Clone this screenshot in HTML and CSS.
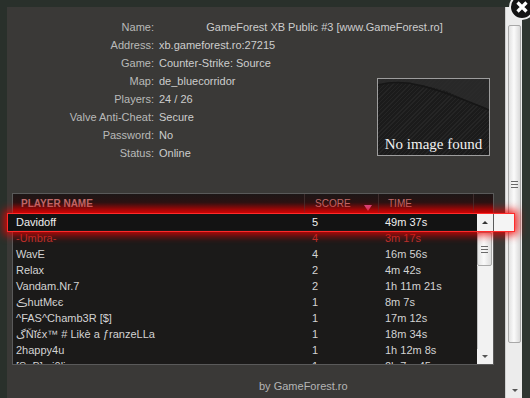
FILE: index.html
```html
<!DOCTYPE html>
<html lang="en">
<head>
    <meta charset="UTF-8">
    <title>Server Info</title>
    <link rel="stylesheet" href="styles.css">
</head>
<body>

<div class="page">

    <div class="modal">

        <div class="info">
            <span class="lbl">Name:</span><span class="val name">GameForest XB Public #3 [www.GameForest.ro]</span>
            <span class="lbl">Address:</span><span class="val">xb.gameforest.ro:27215</span>
            <span class="lbl">Game:</span><span class="val">Counter-Strike: Source</span>
            <span class="lbl">Map:</span><span class="val">de_bluecorridor</span>
            <span class="lbl">Players:</span><span class="val">24 / 26</span>
            <span class="lbl">Valve Anti-Cheat:</span><span class="val">Secure</span>
            <span class="lbl">Password:</span><span class="val">No</span>
            <span class="lbl">Status:</span><span class="val">Online</span>

            <div class="noimg">
                <svg class="ridge" width="111" height="76" viewBox="0 0 111 76">
                    <polygon points="0,0 111,0 111,30 90,22 68,12 45,6 22,4 0,5" fill="#2c2c2c" opacity="0.8"/>
                    <path d="M0,6 C12,3 26,2 44,7 C60,11 80,18 111,31" fill="none" stroke="#161616" stroke-width="1.5"/>
                </svg>
                <span class="noimg-text">No image found</span>
            </div>
        </div>

        <div class="plist-wrap">
            <div class="plist">
                <div class="phead">
                    <span class="h-name">PLAYER NAME</span>
                    <span class="h-score">SCORE <i class="sort"></i></span>
                    <span class="h-time">TIME</span>
                    <span class="h-end"></span>
                </div>
                <div class="pbody">
                    <div class="rows">
                        <div class="row sel"><span>Davidoff</span><span>5</span><span>49m 37s</span></div>
                        <div class="row red"><span>-Umbra-</span><span>4</span><span>3m 17s</span></div>
                        <div class="row"><span>WavE</span><span>4</span><span>16m 56s</span></div>
                        <div class="row"><span>Relax</span><span>2</span><span>4m 42s</span></div>
                        <div class="row"><span>Vandam.Nr.7</span><span>2</span><span>1h 11m 21s</span></div>
                        <div class="row"><span>ڪhutMєє</span><span>1</span><span>8m 7s</span></div>
                        <div class="row"><span>^FAS^Chamb3R [$]</span><span>1</span><span>17m 12s</span></div>
                        <div class="row"><span>گŇĭέx™ # Likè a ƒranzeLLa</span><span>1</span><span>18m 34s</span></div>
                        <div class="row"><span>2happy4u</span><span>1</span><span>1h 12m 8s</span></div>
                        <div class="row"><span>[S_B]...i0li</span><span>1</span><span>2h 7m 45s</span></div>
                    </div>
                    <div class="sb">
                        <div class="sb-up"><i class="arr-up"></i></div>
                        <div class="sb-thumb"><i class="grip"></i></div>
                        <div class="sb-track"></div>
                        <div class="sb-down"><i class="arr-down"></i></div>
                    </div>
                </div>
            </div>
            <div class="hl"></div>
        </div>

        <div class="credit">by GameForest.ro</div>
    </div>

    <div class="pagebar">
        <div class="pb-thumb"><i class="grip"></i></div>
        <div class="pb-down"><i class="arr-down"></i></div>
    </div>
    <div class="edge"></div>

    <div class="close">
        <svg width="22" height="22" viewBox="0 0 22 22">
            <path d="M6.5,6.5 L15.5,15.5 M15.5,6.5 L6.5,15.5" stroke="#fff" stroke-width="3.2"/>
        </svg>
    </div>
</div>

</body>
</html>
```

FILE: styles.css
```css
/* Base */
* { box-sizing: border-box; }

body {
    margin: 0;
    background: #29302b;
    font-family: "Liberation Sans", Arial, "DejaVu Sans", sans-serif;
    font-size: 11px;
    overflow: hidden;
}

.page {
    position: relative;
    display: flex;
    height: 398px;
}

/* Modal window */
.modal {
    width: 498px;
    height: 391px;
    margin: 7px 0 0 7px;
    padding-top: 11px;
    background: #3a3937;
}

/* Server info */
.info {
    display: grid;
    grid-template-columns: 152px 218px 113px;
    grid-auto-rows: 18px;
    line-height: 18px;
}
.lbl {
    grid-column: 1;
    text-align: right;
    padding-right: 5px;
    color: #b9b9b9;
}
.val { color: #cdcdcd; white-space: nowrap; }
.val.name { grid-column: 2 / span 2; text-align: center; }

.noimg {
    grid-column: 3;
    grid-row: 4 / span 5;
    align-self: center;
    height: 78px;
    border: 1px solid #9d9d9d;
    background-color: #1c1c1c;
    background-image: repeating-linear-gradient(135deg, #1b1b1b 0 2px, #252525 2px 3px);
    display: grid;
}
.ridge, .noimg-text { grid-area: 1 / 1; }
.noimg-text {
    align-self: end;
    text-align: center;
    padding-bottom: 2px;
    font-family: "Liberation Serif", "DejaVu Serif", serif;
    font-size: 15px;
    line-height: 18px;
    color: #f2f2f2;
}

/* Player list */
.plist-wrap {
    position: relative;
    width: 482px;
    margin: 31px 0 0 5px;
}
.plist {
    height: 172px;
    border: 1px solid #5a5a5a;
    background: #1b1a19;
    overflow: hidden;
}
.phead {
    display: grid;
    grid-template-columns: 292px 74px 95px 19px;
    height: 19px;
    background: linear-gradient(#1d1717, #2a1212 45%, #900808);
}
.phead span {
    display: flex;
    border-right: 1px solid #3d2c2c;
    line-height: 19px;
    font-size: 10px;
    color: #c06a6a;
}
.phead .h-name { padding-left: 8px; font-weight: bold; }
.phead .h-score { padding-left: 10px; }
.phead .h-time { padding-left: 9px; }
.phead .h-end { border-right: none; }
.sort {
    margin: 11px 6px 0 auto;
    width: 0; height: 0;
    border-left: 4px solid transparent;
    border-right: 4px solid transparent;
    border-top: 6px solid #d24b86;
}

.pbody { display: flex; height: 151px; }
.rows { width: 464px; padding-top: 1px; }
.row {
    display: grid;
    grid-template-columns: 291px 74px 99px;
    height: 16px;
    line-height: 16px;
    color: #d3d3d3;
    white-space: nowrap;
}
.row span:nth-child(1) { padding-left: 3px; }
.row span:nth-child(2) { padding-left: 8px; }
.row span:nth-child(3) { padding-left: 7px; }
.row.sel { background: #131313; color: #efefef; }
.row.red { color: #b8332e; }

/* Inner scrollbar */
.sb {
    width: 16px;
    display: flex;
    flex-direction: column;
    background: #f2f2f2;
}
.sb-up { height: 19px; display: flex; align-items: center; justify-content: center; }
.sb-thumb {
    height: 34px;
    margin: 0 1px 0 0;
    border: 1px solid #a9a9a9;
    border-radius: 2px;
    background: linear-gradient(to right, #e4e4e4, #fafafa 45%, #dedede);
    display: flex;
    align-items: center;
    justify-content: center;
}
.sb-track { flex: 1; border-left: 1px solid #c4c4c4; }
.sb-down { height: 15px; display: flex; align-items: center; justify-content: center; }

.arr-up {
    width: 0; height: 0;
    border-left: 3px solid transparent;
    border-right: 3px solid transparent;
    border-bottom: 3px solid #333;
}
.arr-down {
    width: 0; height: 0;
    border-left: 3px solid transparent;
    border-right: 3px solid transparent;
    border-top: 3px solid #555;
}
.grip {
    width: 7px;
    height: 7px;
    background: repeating-linear-gradient(#6a6a6a 0 1px, transparent 1px 3px);
}

/* Selected row glow */
.hl {
    position: absolute;
    left: -5px;
    top: 20px;
    width: 508px;
    height: 19px;
    border: 1px solid #ff2a2a;
    box-shadow: 0 0 8px 3px rgba(240, 0, 0, 0.85);
    background: linear-gradient(to right, #131313 0 5px, transparent 5px 486px, #f4f4f4 486px);
}

.credit {
    margin-top: 15px;
    padding-left: 252px;
    line-height: 13px;
    color: #b5b5b5;
}

/* Page scrollbar */
.pagebar {
    width: 17px;
    height: 391px;
    margin-top: 7px;
    padding: 18px 1px 0 2px;
    background: #ececec;
    border-left: 1px solid #cfcfcf;
    display: flex;
    flex-direction: column;
}
.pb-thumb {
    height: 318px;
    border: 1px solid #a8a8a8;
    border-radius: 2px;
    background: linear-gradient(to right, #e2e2e2, #fbfbfb 45%, #dadada);
    display: flex;
    align-items: center;
    justify-content: center;
}
.pb-down { flex: 1; display: flex; align-items: flex-end; justify-content: center; padding-bottom: 6px; }

.edge { flex: 1; background: #2f3631; }

/* Close button */
.close {
    position: absolute;
    left: 509px;
    top: -6px;
    width: 26px;
    height: 26px;
    border-radius: 50%;
    border: 2px solid #eeeeee;
    background: #141414;
}
.close svg { display: block; }
```
